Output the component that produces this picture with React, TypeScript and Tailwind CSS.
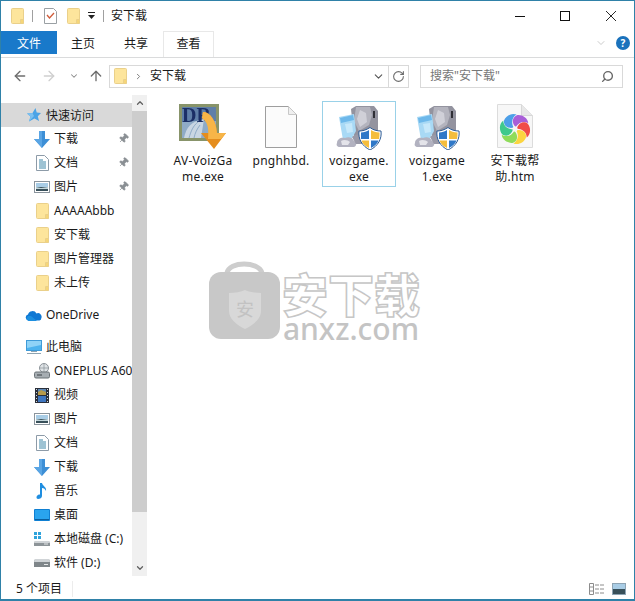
import { ChevronDown, ChevronUp, RotateCw, Search, ArrowLeft, ArrowRight, ArrowUp, ChevronRight, Pin } from 'lucide-react'
import type { ReactNode } from 'react'

const Folder = ({ className = 'w-[13px] h-4' }: { className?: string }) => (
  <svg viewBox="0 0 13 16" className={className}>
    <rect x=".5" y=".5" width="12" height="15" rx="1" fill="#fde59c" stroke="#ead08a" />
    <path d="M9.500 11.500h3v4h-3z" fill="#f6d678" stroke="#ead08a" />
  </svg>
)

const DownloadIcon = () => (
  <svg viewBox="0 0 16 17" className="w-4 h-[17px]">
    <path d="M5 0h6v8h5l-8 9-8-9h5z" fill="#3d8fd6" />
    <path d="M5 0h3v17L0 8h5z" fill="#5aa5e4" />
  </svg>
)

const DocIcon = () => (
  <svg viewBox="0 0 13 16" className="w-[13px] h-4">
    <path d="M.5.500h8l4 4v11H.5z" fill="#fff" stroke="#8d9ba8" />
    <path d="M3 5h4M3 7h7M3 9h7M3 11h7M3 13h7" stroke="#3f87a8" />
  </svg>
)

const PicIcon = () => (
  <svg viewBox="0 0 16 12" className="w-4 h-3">
    <rect x=".5" y=".5" width="15" height="11" fill="#fff" stroke="#8a949c" />
    <rect x="2" y="2" width="12" height="4" fill="#a9cde6" />
    <rect x="2" y="6" width="12" height="4" fill="#38505a" />
    <path d="M2 6l5 1 7-1v2H2z" fill="#c4d7dc" />
  </svg>
)

const StarIcon = () => (
  <svg viewBox="0 0 14 14" className="w-[14px] h-[14px]">
    <path d="M8.500 0l1.200 4.500L14 5l-3.200 3.200L12 13 7.500 10.600 2 13.500l1.500-5L0 5.500l5.500-.6z" fill="#4aa3e6" />
    <path d="M0 5.500l5.500-.6L7 8 2 13.500l1.500-5z" fill="#7cc0f0" />
  </svg>
)

const CloudIcon = () => (
  <svg viewBox="0 0 17 11" className="w-[17px] h-[11px]">
    <path d="M3.500 10.500A3 3 0 0 1 3 4.600 4.600 4.600 0 0 1 11.500 3.500a3.600 3.600 0 0 1 4.800 4.700 2.400 2.400 0 0 1-1.800 2.300z" fill="#0f78d4" />
    <path d="M3.500 11A3 3 0 0 1 3 6h3l6 5z" fill="#1c8fe0" />
  </svg>
)

const PcIcon = () => (
  <svg viewBox="0 0 16 14" className="w-4 h-[14px]">
    <rect x=".5" y=".5" width="15" height="10" fill="#4db3ee" stroke="#3f9bd8" />
    <path d="M1 1h14v4L1 8z" fill="#8fd3f7" />
    <path d="M5 11h6v1H5zM1 13h14v1H1z" fill="#8ea4b2" />
  </svg>
)

const PhoneDriveIcon = () => (
  <svg viewBox="0 0 16 16" className="w-4 h-4">
    <circle cx="10" cy="5" r="4.500" fill="#dfe3e6" stroke="#8b9298" />
    <path d="M10 1v8M6 5h8" stroke="#8b9298" strokeWidth=".7" />
    <rect x=".5" y="9" width="15" height="6" rx="1.500" fill="#a6adb2" stroke="#6b7277" />
    <path d="M3 12h5" stroke="#3b4145" />
  </svg>
)

const VideoIcon = () => (
  <svg viewBox="0 0 14 15" className="w-[14px] h-[15px]">
    <rect width="14" height="15" fill="#2a2f3a" />
    <rect x="3" y="1" width="8" height="6" fill="#5d87b4" />
    <path d="M3 4l3-2 5 2v3H3z" fill="#b79a4a" />
    <rect x="3" y="8" width="8" height="6" fill="#3f76c0" />
    <path d="M1 1h1v1H1zM1 4h1v1H1zM1 7h1v1H1zM1 10h1v1H1zM1 13h1v1H1zM12 1h1v1h-1zM12 4h1v1h-1zM12 7h1v1h-1zM12 10h1v1h-1zM12 13h1v1h-1z" fill="#d4d8dc" />
  </svg>
)

const MusicIcon = () => (
  <svg viewBox="0 0 12 16" className="w-3 h-4">
    <path d="M4 0h2c.5 3 5 4 4 8-1-2-2-3-4-3v8c0 2-2 3-4 3s-2-3 0-4c1-.5 1.500-.5 2-.3z" fill="#1f8ee0" />
  </svg>
)

const DesktopIcon = () => (
  <svg viewBox="0 0 16 12" className="w-4 h-3">
    <rect width="16" height="12" rx="1" fill="#0f7fd2" />
    <rect x="1" y="1" width="14" height="9" fill="#2aa4ee" />
    <path d="M1 10h14v1H1z" fill="#0b5f9e" />
  </svg>
)

const SysDriveIcon = () => (
  <svg viewBox="0 0 16 14" className="w-4 h-[14px]">
    <path d="M0 0h3v3H0zM4 0h3v3H4zM0 4h3v3H0zM4 4h3v3H4z" fill="#2fa3dc" />
    <path d="M1 9h14l1 2v3H0v-3z" fill="#8d9498" />
    <path d="M1 9h14l1 2H0z" fill="#cfd3d6" />
    <path d="M10 12h4" stroke="#e5e7e8" />
  </svg>
)

const DriveIcon = () => (
  <svg viewBox="0 0 16 8" className="w-4 h-2">
    <path d="M1 0h14l1 3v5H0V3z" fill="#7f868a" />
    <path d="M1 0h14l1 3H0z" fill="#d0d4d7" />
    <path d="M10 5.500h4" stroke="#e5e7e8" />
  </svg>
)

const NavRow = ({ icon, label, pin, indent = true, active }: { icon: ReactNode; label: string; pin?: boolean; indent?: boolean; active?: boolean }) => (
  <div className={`flex items-center h-6 w-[131px] overflow-hidden relative ${indent ? 'pl-[33px]' : 'pl-[24px]'} ${active ? 'bg-[#d9d9d9]' : ''}`}>
    <span className={`flex items-center justify-center shrink-0 ${indent ? 'w-4 mr-[4px]' : 'w-[17px] mr-[4px]'}`}>{icon}</span>
    <span className={`whitespace-nowrap text-[#1a1a1a] ${active ? 'pt-[1px]' : ''}`}>{label}</span>
    {pin && (
      <Pin className="absolute right-[3px] top-[6px] w-[11px] h-[11px] text-[#8a8f94] rotate-45 fill-[#8a8f94]" strokeWidth={1.5} />
    )}
  </div>
)

const ExeArt = () => (
  <svg viewBox="0 0 46 46" className="w-[46px] h-[46px] blur-[0.3px]">
    <path d="M15 5l5-3h18l4 5v20l-6 6H18z" fill="#93939f" />
    <path d="M20 3h14l2 8-3 10-10 6-5-10z" fill="#b4b4be" />
    <path d="M24 6l6 3 1 9-7 5-3-8z" fill="#d0d0d8" />
    <path d="M37 7h2v7h-2z" fill="#2f2f36" />
    <path d="M3 13l15-3 2 17-5 9H7z" fill="#a8d9f5" />
    <path d="M4 14l13-3 1 5-13 3z" fill="#6db8ea" />
    <path d="M9 20l7-1 1 9-6 1z" fill="#c6e8fa" />
    <path d="M1 39c0-4 4-6 8-5 4-2 8 0 9 3 3 0 3 5 0 6H4c-3 0-4-2-3-4z" fill="#b2b2c0" />
    <path d="M5 37c3-2 7-1 9 1l-2 3H6z" fill="#e4e4ea" />
    <path d="M16 33c4-3 8-3 10-1v8h-6z" fill="#9a9aa8" />
    <path d="M23 27c4 0 7-1 11-3.500 3 2.500 7 3.500 11 3.500 1 8-3 15-11 19-8-4-12-11-11-19z" fill="#fff" stroke="#2d5c96" />
    <path d="M25 28.500c3 0 6-1 8-2.500v9h-8z" fill="#2f78c8" />
    <path d="M35 26c2 1.500 5 2.500 8.500 2.500 0 2.500 0 4.500-.5 6.500h-8z" fill="#f4bd3c" />
    <path d="M25.500 36.500H33V44c-4-2-6.500-4.500-7.500-7.500z" fill="#f4bd3c" />
    <path d="M35 36.500h7.500c-1 3-4 6-7.500 7.500z" fill="#2f78c8" />
  </svg>
)

const AvArt = () => (
  <svg viewBox="0 0 48 48" className="w-[48px] h-[48px] blur-[0.3px]">
    <rect x="0" y="2" width="40" height="37" fill="#88946a" />
    <rect x="3" y="5" width="34" height="31" fill="#8fabc7" />
    <path d="M3 5h34v14H3z" fill="#5f7fa8" />
    <path d="M5 36c2-10 7-17 20-19l-3 19z" fill="#c9d6e3" />
    <path d="M10 36c2-7 4-12 9-16M15 36c1-5 3-9 6-13" stroke="#8fabc7" fill="none" />
    <text x="3" y="20" fontFamily="'Liberation Serif', serif" fontSize="20" fontWeight="700" fill="#1b2f66">DR</text>
    <path d="M24 10c7 0 13 8 14 21h9L35 47 22 31h8c0-7-2-12-7-15z" fill="#e58d1d" />
    <path d="M24 10c7 0 13 8 14 21h9l-5 6H29c1-10 0-17-6-21z" fill="#f7b548" />
  </svg>
)

const BlankArt = () => (
  <svg viewBox="0 0 32 42" className="w-8 h-[42px] mb-[2px]">
    <path d="M.5.500h23l8 8v33H.5z" fill="#fbfbfb" stroke="#9e9e9e" />
    <path d="M23.500.500v8h8" fill="#efefef" stroke="#c8c8c8" />
  </svg>
)

const blades = [
  { deg: 20, color: '#a95fd8' },
  { deg: 80, color: '#f04c48' },
  { deg: 140, color: '#fcd540' },
  { deg: 200, color: '#8fdc5a' },
  { deg: 260, color: '#3fc98c' },
  { deg: 320, color: '#4d9fe8' },
]

const HtmArt = () => (
  <svg viewBox="0 0 36 44" className="w-9 h-11 mb-[2px] blur-[0.2px]">
    <path d="M.5.500h24l11 11v32H.5z" fill="#f7f7f7" stroke="#dcdcdc" />
    <path d="M24.500.500v11h11" fill="#e8e8e8" stroke="#d8d8d8" />
    {blades.map(b => (
      <path
        key={b.deg}
        transform={`translate(18 25) rotate(${b.deg})`}
        d="M0-2C-5-4-7-10-3-13.500 1-16 8-15 10.500-10 6-11 1-8 0-2z"
        fill={b.color}
      />
    ))}
    <circle cx="18" cy="25" r="2.500" fill="#f7f7f7" />
  </svg>
)

const FileCell = ({ art, name, selected }: { art: ReactNode; name: string[]; selected?: boolean }) => (
  <div className={`w-[74px] h-[86px] flex flex-col items-center border ${selected ? 'border-[#99d1e8]' : 'border-transparent'}`}>
    <div className="h-[48px] flex items-end justify-center shrink-0">{art}</div>
    <div className="mt-[3px] text-center leading-[16px] text-[#1a1a1a] tracking-[0.25px]">
      {name.map(line => (
        <div key={line} className="whitespace-nowrap">{line}</div>
      ))}
    </div>
  </div>
)

export default function App() {
  return (
    <div className="w-[635px] h-[601px] relative overflow-hidden flex flex-col bg-white border border-[#2f81a8] border-b-2 text-[12px] font-['Noto_Sans','Noto_Sans_CJK_SC',sans-serif] text-[#1a1a1a]">
      {/* title bar */}
      <div className="h-[30px] flex items-center shrink-0 pl-[10px]">
        <Folder />
        <span className="w-px h-3 bg-[#a0a0a0] ml-[8px]" />
        <svg viewBox="0 0 13 16" className="w-[13px] h-4 ml-[11px]">
          <path d="M.5.500h9l3 3v12H.5z" fill="#fff" stroke="#9aa0a4" />
          <path d="M3 7l2.500 3L10 5" fill="none" stroke="#cf5b3a" strokeWidth="1.3" />
        </svg>
        <Folder className="w-[13px] h-4 ml-[10px]" />
        <svg viewBox="0 0 7 8" className="w-[7px] h-2 ml-[8px]">
          <path d="M0 0h7v1H0zM0 3h7L3.500 7z" fill="#222" />
        </svg>
        <span className="w-px h-3 bg-[#a0a0a0] ml-[8px]" />
        <span className="ml-[7px]">安下载</span>
        <div className="ml-auto flex items-center">
          <span className="w-[10px] h-px bg-[#111] mr-[35px]" />
          <span className="w-[10px] h-[10px] border border-[#111] mr-[36px]" />
          <svg viewBox="0 0 10 10" className="w-[10px] h-[10px] mr-[18px]">
            <path d="M0 0l10 10M10 0L0 10" stroke="#111" strokeWidth=".9" />
          </svg>
        </div>
      </div>
      {/* ribbon tabs */}
      <div className="h-[27px] flex shrink-0 border-b border-[#dadbdc] items-stretch">
        <div className="w-[56px] h-[23px] bg-[#1979ca] text-white flex items-center justify-center pt-[2px]">文件</div>
        <div className="w-[52px] h-[23px] flex items-center justify-center pt-[2px]">主页</div>
        <div className="w-[54px] h-[23px] flex items-center justify-center pt-[2px]">共享</div>
        <div className="w-[51px] h-[26px] flex items-center justify-center border border-b-0 border-[#e8e8e8] pb-[1px]">查看</div>
        <div className="ml-auto flex items-center h-[22px] mr-[4px] mt-[1px]">
          <ChevronDown className="w-[12px] h-[12px] text-[#a8a8a8] mr-[9px]" strokeWidth={1.2} />
          <span className="w-[14px] h-[14px] rounded-full bg-[#1a72bc] text-white text-[10px] leading-[14px] text-center font-bold">?</span>
        </div>
      </div>
      {/* address bar */}
      <div className="h-[37px] flex items-center shrink-0 pl-[11px] pb-[1px]">
        <ArrowLeft className="w-4 h-4 text-[#6d6d6d]" strokeWidth={2} />
        <ArrowRight className="w-4 h-4 text-[#cfcfcf] ml-[13px]" strokeWidth={2} />
        <ChevronDown className="w-[10px] h-[10px] text-[#8a8a8a] ml-[12px]" strokeWidth={2.5} />
        <ArrowUp className="w-4 h-4 text-[#6d6d6d] ml-[9px]" strokeWidth={2} />
        <div className="w-[300px] h-[23px] ml-[5px] border border-[#d9d9d9] flex items-center pl-[4px]">
          <Folder />
          <ChevronRight className="w-[9px] h-[9px] text-[#777] ml-[7px]" strokeWidth={2.5} />
          <span className="ml-[7px]">安下载</span>
          <ChevronDown className="w-[13px] h-[13px] text-[#555] ml-auto mr-[3px]" strokeWidth={2} />
          <div className="w-[20px] h-full border-l border-[#d9d9d9] flex items-center justify-center">
            <RotateCw className="w-[13px] h-[13px] text-[#6d6d6d]" strokeWidth={2} />
          </div>
        </div>
        <div className="w-[203px] h-[23px] ml-[11px] border border-[#d9d9d9] flex items-center pl-[9px] pr-[8px] text-[#777]">
          <span>搜索"安下载"</span>
          <Search className="w-[13px] h-[13px] ml-auto text-[#666] -scale-x-100" strokeWidth={2.5} />
        </div>
      </div>
      {/* main */}
      <div className="flex-1 min-h-0 flex">
        <div className="w-[131px] shrink-0 pt-[8px] overflow-hidden">
          <NavRow indent={false} active icon={<StarIcon />} label="快速访问" />
          <NavRow icon={<DownloadIcon />} label="下载" pin />
          <NavRow icon={<DocIcon />} label="文档" pin />
          <NavRow icon={<PicIcon />} label="图片" pin />
          <NavRow icon={<Folder />} label="AAAAAbbb" />
          <NavRow icon={<Folder />} label="安下载" />
          <NavRow icon={<Folder />} label="图片管理器" />
          <NavRow icon={<Folder />} label="未上传" />
          <div className="h-2" />
          <NavRow indent={false} icon={<CloudIcon />} label="OneDrive" />
          <div className="h-2" />
          <NavRow indent={false} icon={<PcIcon />} label="此电脑" />
          <NavRow icon={<PhoneDriveIcon />} label="ONEPLUS A6000" />
          <NavRow icon={<VideoIcon />} label="视频" />
          <NavRow icon={<PicIcon />} label="图片" />
          <NavRow icon={<DocIcon />} label="文档" />
          <NavRow icon={<DownloadIcon />} label="下载" />
          <NavRow icon={<MusicIcon />} label="音乐" />
          <NavRow icon={<DesktopIcon />} label="桌面" />
          <NavRow icon={<SysDriveIcon />} label="本地磁盘 (C:)" />
          <NavRow icon={<DriveIcon />} label="软件 (D:)" />
        </div>
        {/* nav scrollbar */}
        <div className="w-[15px] shrink-0 bg-[#f0f0f0] flex flex-col">
          <div className="h-[16px] flex items-center justify-center">
            <ChevronUp className="w-[10px] h-[10px] text-[#606060]" strokeWidth={3} />
          </div>
          <div className="h-[401px] bg-[#cdcdcd]" />
          <div className="mt-auto h-[17px] flex items-center justify-center">
            <ChevronDown className="w-[10px] h-[10px] text-[#606060]" strokeWidth={3} />
          </div>
        </div>
        {/* files */}
        <div className="flex-1 flex gap-[4px] pl-[19px] pt-[6px] items-start">
          <FileCell art={<AvArt />} name={['AV-VoizGa', 'me.exe']} />
          <FileCell art={<BlankArt />} name={['pnghhbd.']} />
          <FileCell selected art={<ExeArt />} name={['voizgame.', 'exe']} />
          <FileCell art={<ExeArt />} name={['voizgame', '1.exe']} />
          <FileCell art={<HtmArt />} name={['安下载帮', '助.htm']} />
        </div>
      </div>
      {/* status bar */}
      <div className="h-[23px] shrink-0 flex items-center pl-[15px] pr-[8px] pt-[3px]">
        <span>5 个项目</span>
        <span className="w-px h-4 bg-[#ececec] ml-[10px]" />
        <svg viewBox="0 0 16 12" className="w-4 h-3 ml-auto">
          <path d="M.5.500h4v11h-4zM.5 4h4M.5 8h4" fill="none" stroke="#8c8c8c" />
          <path d="M6 2h10M6 6h10M6 10h10" stroke="#8c8c8c" strokeDasharray="4 1" />
        </svg>
        <span className="ml-[7px] w-[14px] h-[12px] border border-[#8ea4b4] bg-[linear-gradient(#a9cde6_50%,#38505a_50%)]" />
      </div>
      {/* watermark */}
      <div className="absolute left-[208px] top-[257px] flex items-start pointer-events-none">
        <svg viewBox="0 0 72 82" className="w-[72px] h-[82px]">
          <path d="M18 15C20 3 50 3 53 15" fill="none" stroke="#cdcdcd" strokeWidth="5" />
          <rect y="14" width="71" height="67" rx="12" fill="#c8c8c8" />
          <path d="M20 35c6 0 12-1 16-3 4 2 10 3 16 3v18c0 8-8 14-16 18-8-4-16-10-16-18z" fill="#d8d8d8" />
          <text x="36" y="58" textAnchor="middle" fontFamily="'Noto Sans CJK SC', sans-serif" fontSize="18" fill="#c2c2c2">安</text>
        </svg>
        <div className="ml-[1px] mt-[14px] flex flex-col items-center">
          <div className="text-[46px] leading-[44px] font-black text-white [-webkit-text-stroke:1.5px_#c6c6c6]">安下载</div>
          <div className="text-[30px] leading-[26px] font-medium text-[#c4c4c4]">anxz.com</div>
        </div>
      </div>
    </div>
  )
}
